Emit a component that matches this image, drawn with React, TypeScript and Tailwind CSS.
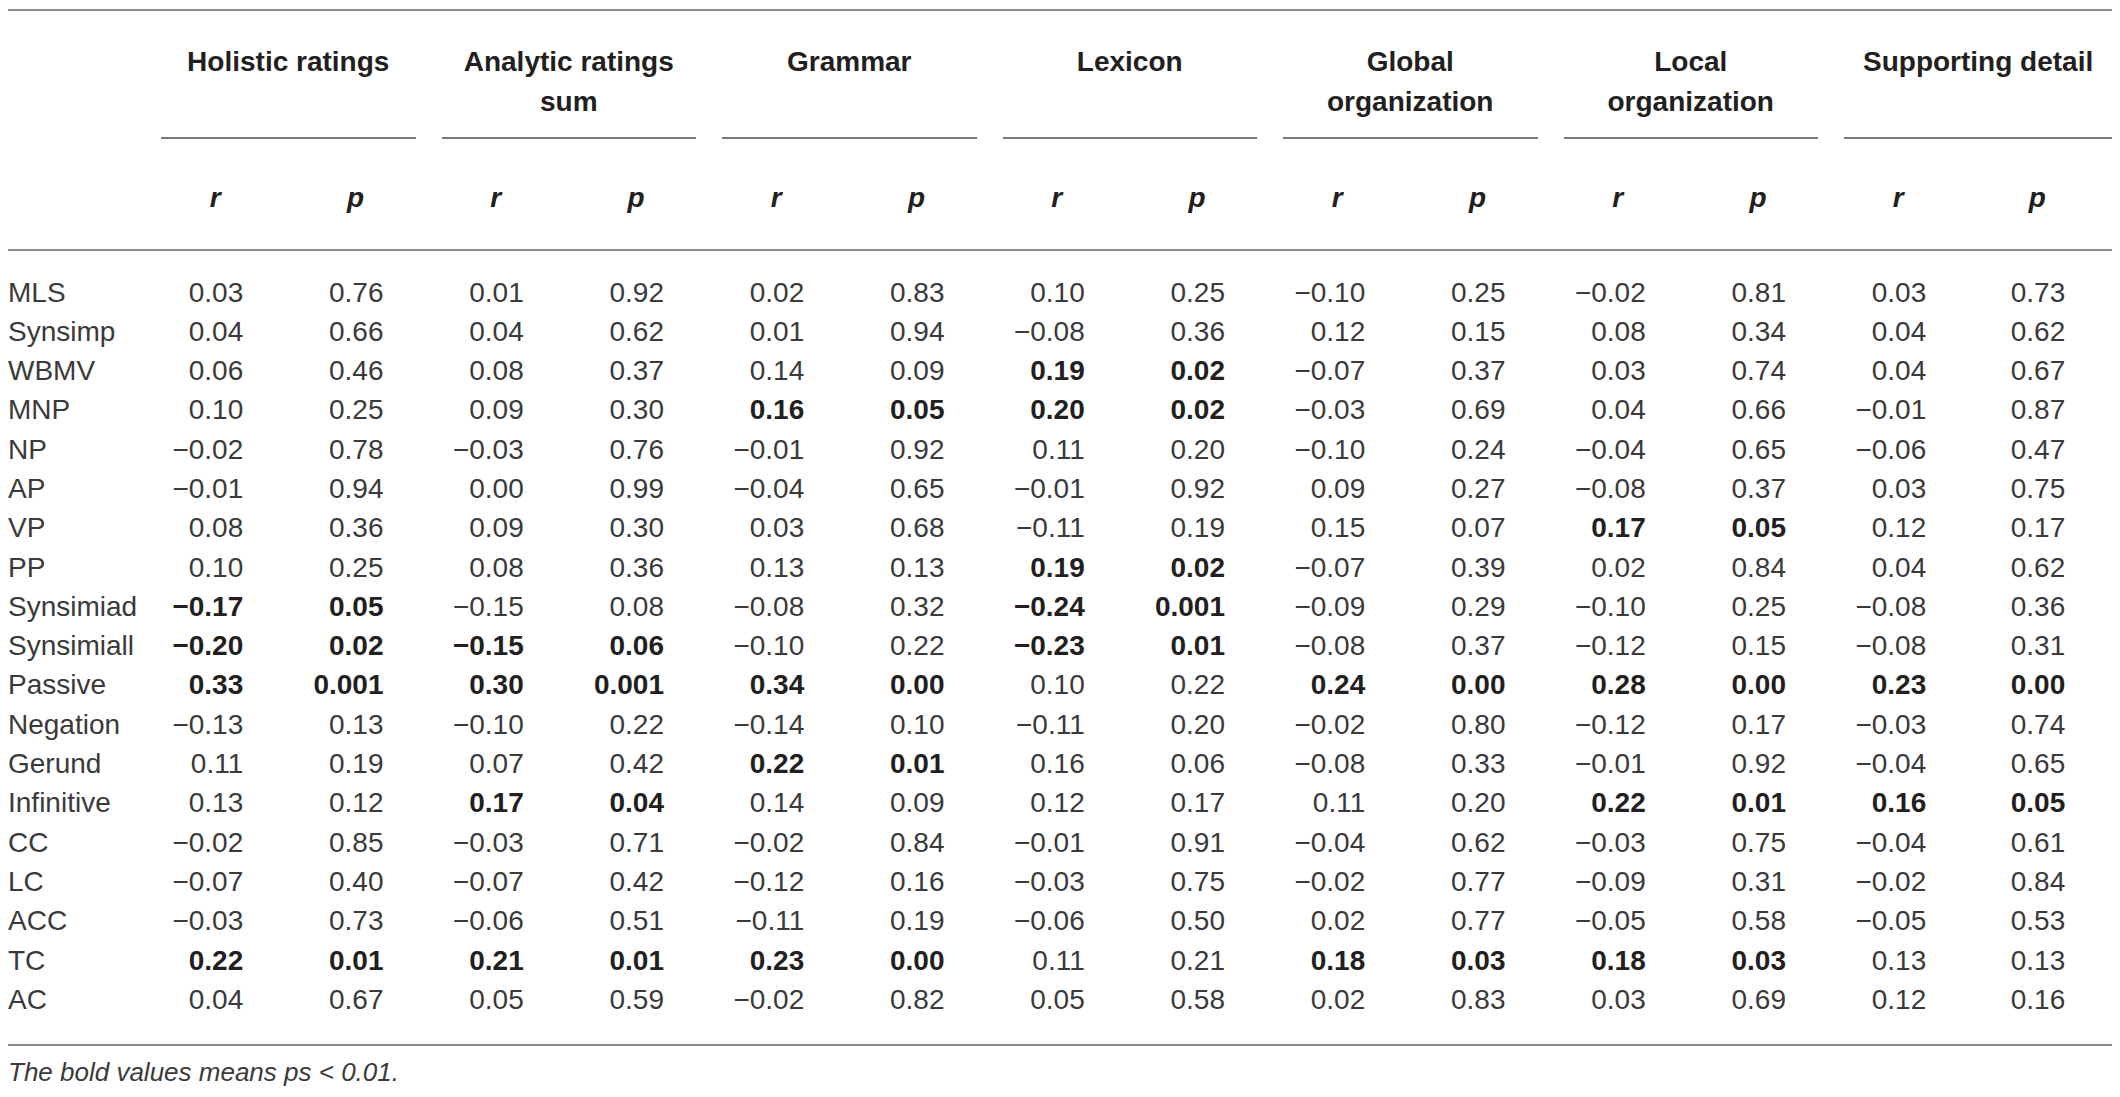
import React from 'react';

const groups: React.ReactNode[] = [
    'Holistic ratings',
    <>Analytic ratings<br />sum</>,
    'Grammar',
    'Lexicon',
    <>Global<br />organization</>,
    <>Local<br />organization</>,
    'Supporting detail',
];

// "*" marks a bold value, "-" is shown as a minus sign
const rows: [string, string][] = [
    ['MLS', '0.03 0.76 0.01 0.92 0.02 0.83 0.10 0.25 -0.10 0.25 -0.02 0.81 0.03 0.73'],
    ['Synsimp', '0.04 0.66 0.04 0.62 0.01 0.94 -0.08 0.36 0.12 0.15 0.08 0.34 0.04 0.62'],
    ['WBMV', '0.06 0.46 0.08 0.37 0.14 0.09 *0.19 *0.02 -0.07 0.37 0.03 0.74 0.04 0.67'],
    ['MNP', '0.10 0.25 0.09 0.30 *0.16 *0.05 *0.20 *0.02 -0.03 0.69 0.04 0.66 -0.01 0.87'],
    ['NP', '-0.02 0.78 -0.03 0.76 -0.01 0.92 0.11 0.20 -0.10 0.24 -0.04 0.65 -0.06 0.47'],
    ['AP', '-0.01 0.94 0.00 0.99 -0.04 0.65 -0.01 0.92 0.09 0.27 -0.08 0.37 0.03 0.75'],
    ['VP', '0.08 0.36 0.09 0.30 0.03 0.68 -0.11 0.19 0.15 0.07 *0.17 *0.05 0.12 0.17'],
    ['PP', '0.10 0.25 0.08 0.36 0.13 0.13 *0.19 *0.02 -0.07 0.39 0.02 0.84 0.04 0.62'],
    ['Synsimiad', '*-0.17 *0.05 -0.15 0.08 -0.08 0.32 *-0.24 *0.001 -0.09 0.29 -0.10 0.25 -0.08 0.36'],
    ['Synsimiall', '*-0.20 *0.02 *-0.15 *0.06 -0.10 0.22 *-0.23 *0.01 -0.08 0.37 -0.12 0.15 -0.08 0.31'],
    ['Passive', '*0.33 *0.001 *0.30 *0.001 *0.34 *0.00 0.10 0.22 *0.24 *0.00 *0.28 *0.00 *0.23 *0.00'],
    ['Negation', '-0.13 0.13 -0.10 0.22 -0.14 0.10 -0.11 0.20 -0.02 0.80 -0.12 0.17 -0.03 0.74'],
    ['Gerund', '0.11 0.19 0.07 0.42 *0.22 *0.01 0.16 0.06 -0.08 0.33 -0.01 0.92 -0.04 0.65'],
    ['Infinitive', '0.13 0.12 *0.17 *0.04 0.14 0.09 0.12 0.17 0.11 0.20 *0.22 *0.01 *0.16 *0.05'],
    ['CC', '-0.02 0.85 -0.03 0.71 -0.02 0.84 -0.01 0.91 -0.04 0.62 -0.03 0.75 -0.04 0.61'],
    ['LC', '-0.07 0.40 -0.07 0.42 -0.12 0.16 -0.03 0.75 -0.02 0.77 -0.09 0.31 -0.02 0.84'],
    ['ACC', '-0.03 0.73 -0.06 0.51 -0.11 0.19 -0.06 0.50 0.02 0.77 -0.05 0.58 -0.05 0.53'],
    ['TC', '*0.22 *0.01 *0.21 *0.01 *0.23 *0.00 0.11 0.21 *0.18 *0.03 *0.18 *0.03 0.13 0.13'],
    ['AC', '0.04 0.67 0.05 0.59 -0.02 0.82 0.05 0.58 0.02 0.83 0.03 0.69 0.12 0.16'],
];

export default function App() {
    return (
        <div className="min-h-screen bg-white pt-[9px] pl-[8px] font-['Liberation_Sans',Arial,sans-serif] text-[28px] text-[#231f20]">
            <div className="w-[2104px] border-t-2 border-[#8c8c8c]">
                <div className="grid grid-cols-[153px_repeat(13,140.25px)_128px]">
                    {/* Group titles */}
                    <div />
                    {groups.map((g, i) => (
                        <div
                            key={i}
                            className={`col-span-2 border-b-2 border-[#7a7a7a] pt-[31px] pb-[15px] text-center font-bold leading-[40px] ${i === 6 ? 'mr-0' : 'mr-[26px]'}`}
                        >
                            {g}
                        </div>
                    ))}

                    {/* r / p */}
                    <div />
                    {Array.from({ length: 14 }).map((_, i) => (
                        <div
                            key={i}
                            className={`pt-[39px] pb-[31px] text-right font-bold italic leading-[40px] ${i === 13 ? 'pr-[47px]' : 'pr-[58px]'}`}
                        >
                            <span className="inline-block w-[56px] text-center">{i % 2 === 0 ? 'r' : 'p'}</span>
                        </div>
                    ))}

                    <div className="col-span-full h-[2px] bg-[#8c8c8c]" />
                    <div className="col-span-full h-[21.5px]" />

                    {/* Body */}
                    {rows.map(([label, vals]) => (
                        <React.Fragment key={label}>
                            <div className="h-[39.3px] leading-[39.3px] text-[#3a3a3a]">{label}</div>
                            {vals.split(' ').map((v, i) => {
                                const bold = v.startsWith('*');
                                const text = (bold ? v.slice(1) : v).replace('-', '\u2212');
                                return (
                                    <div
                                        key={i}
                                        className={`h-[39.3px] text-right leading-[39.3px] ${i === 13 ? 'pr-[47px]' : 'pr-[58px]'} ${bold ? 'font-bold text-[#231f20]' : 'text-[#3a3a3a]'}`}
                                    >
                                        {text}
                                    </div>
                                );
                            })}
                        </React.Fragment>
                    ))}

                    <div className="col-span-full h-[25px]" />
                    <div className="col-span-full h-[2px] bg-[#8c8c8c]" />
                </div>

                {/* Footnote */}
                <p className="pt-[6px] text-[26px] italic leading-[40px] text-[#3a3a3a]">
                    The bold values means ps &lt; 0.01.
                </p>
            </div>
        </div>
    );
}
